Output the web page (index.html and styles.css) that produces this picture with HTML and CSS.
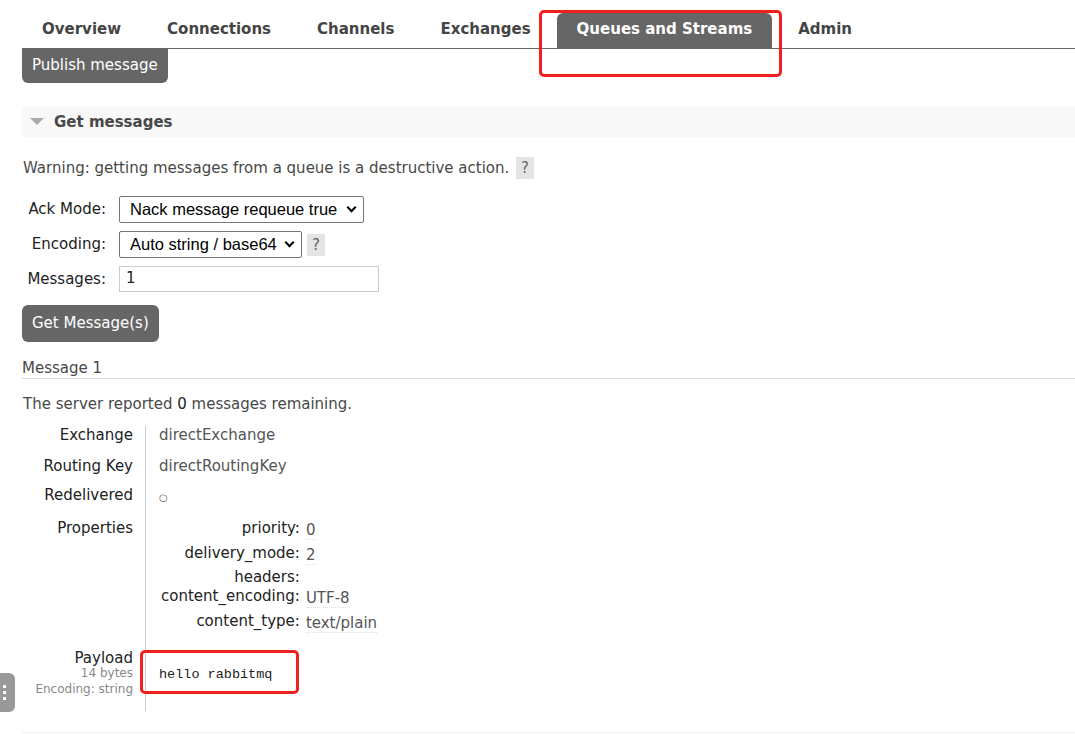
FILE: index.html
```html
<!DOCTYPE html>
<html>
<head>
<meta charset="utf-8">
<link rel="stylesheet" href="styles.css">
</head>
<body>
<div class="page">
  <nav class="tabs">
    <span class="tab">Overview</span>
    <span class="tab">Connections</span>
    <span class="tab">Channels</span>
    <span class="tab">Exchanges</span>
    <span class="tab active">Queues and Streams</span>
    <span class="tab">Admin</span>
  </nav>
  <div class="sub"><span class="btn-tab">Publish message</span></div>

  <div class="section-head"><span class="tri"></span>Get messages</div>

  <p class="warn">Warning: getting messages from a queue is a destructive action. <span class="help">?</span></p>

  <div class="form">
    <label class="lbl">Ack Mode:</label>
    <div class="ctl"><span class="select w1">Nack message requeue true<span class="chev"></span></span></div>
    <label class="lbl">Encoding:</label>
    <div class="ctl"><span class="select w2">Auto string / base64<span class="chev"></span></span><span class="help h2">?</span></div>
    <label class="lbl">Messages:</label>
    <div class="ctl"><span class="input">1</span></div>
  </div>

  <div class="actions"><span class="button">Get Message(s)</span></div>

  <h3 class="msg-title">Message 1</h3>
  <p class="remaining">The server reported <b>0</b> messages remaining.</p>

  <div class="details">
    <div class="k r1">Exchange</div><div class="v r1">directExchange</div>
    <div class="k r2">Routing Key</div><div class="v r2">directRoutingKey</div>
    <div class="k r3">Redelivered</div><div class="v r3 circle">○</div>
    <div class="k r4">Properties</div>
    <div class="v r4 props">
      <span class="pk">priority:</span><span class="pv">0</span>
      <span class="pk">delivery_mode:</span><span class="pv">2</span>
      <span class="pk">headers:</span><span class="pv empty"></span>
      <span class="pk">content_encoding:</span><span class="pv">UTF-8</span>
      <span class="pk">content_type:</span><span class="pv">text/plain</span>
    </div>
    <div class="k r5 payload-k">Payload<small>14 bytes</small><small>Encoding: string</small></div>
    <div class="v r5 payload"><pre>hello rabbitmq</pre></div>
  </div>
  <div class="endline"></div>
</div>

<div class="side-tab"><i></i><i></i><i></i></div>
<div class="mark mark-tab"></div>
<div class="mark mark-payload"></div>
</body>
</html>
```

FILE: styles.css
```css
* { box-sizing: border-box; }
html, body { margin: 0; padding: 0; background: #fff; }
body {
  font-family: "DejaVu Sans", Verdana, sans-serif;
  font-size: 15px;
  color: #484848;
  width: 1075px;
  height: 734px;
  overflow: hidden;
  position: relative;
}
.page { padding-left: 22px; }

.tabs {
  display: flex;
  align-items: flex-end;
  height: 49px;
  border-bottom: 1px solid #666;
}
.tab {
  font-weight: bold;
  font-size: 15px;
  color: #444;
  padding: 0 20px;
  height: 35px;
  line-height: 32px;
  margin-right: 6px;
  border-radius: 6px 6px 0 0;
  white-space: nowrap;
}
.tab.active { background: #666; color: #fff; }

.sub { display: flex; }
.btn-tab {
  background: #666;
  color: #fff;
  padding: 0 10px;
  height: 34px;
  line-height: 32px;
  border-radius: 0 0 6px 6px;
}

.section-head {
  margin-top: 23px;
  background: #f8f8f8;
  height: 31px;
  display: flex;
  align-items: center;
  font-weight: bold;
  color: #484848;
  padding-left: 8px;
}
.tri {
  width: 0; height: 0;
  border-left: 7px solid transparent;
  border-right: 7px solid transparent;
  border-top: 7px solid #aaa;
  margin-right: 10px;
}

.warn { margin: 20px 0 0 1px; height: 22px; line-height: 22px; display: flex; align-items: center; white-space: pre; }
.help {
  display: inline-block;
  background: #e4e4e4;
  color: #666;
  width: 18px;
  height: 22px;
  line-height: 22px;
  text-align: center;
  margin-left: 2px;
}
.form {
  margin-top: 17px;
  display: grid;
  grid-template-columns: 97px auto;
  row-gap: 8px;
  align-items: center;
}
.lbl { text-align: right; padding-right: 13px; color: #222; padding-bottom: 1px; }
.ctl { display: flex; align-items: center; }
.select {
  display: inline-flex;
  align-items: center;
  justify-content: space-between;
  height: 27px;
  border: 1px solid #767676;
  border-radius: 2px;
  font-family: "Liberation Sans", Arial, sans-serif;
  font-size: 16.5px;
  color: #000;
  padding: 0 6px 0 10px;
  white-space: nowrap;
}
.w1 { width: 245px; }
.w2 { width: 183px; }
.chev {
  width: 7px; height: 7px;
  border-right: 2px solid #000;
  border-bottom: 2px solid #000;
  transform: rotate(45deg);
  margin: -4px 2px 0 0;
}
.h2 { margin-left: 5px; }
.input {
  display: inline-block;
  width: 260px;
  height: 26px;
  border: 1px solid #ccc;
  color: #222;
  padding: 0 6px;
  line-height: 22px;
}

.actions { margin-top: 13px; display: flex; }
.button {
  background: #666;
  color: #fff;
  border-radius: 6px;
  padding: 0 10px;
  height: 37px;
  line-height: 37px;
}

.msg-title {
  margin: 17px 0 0 0;
  font-weight: normal;
  font-size: 15px;
  color: #484848;
  line-height: 18px;
  padding-bottom: 1px;
  border-bottom: 1px solid #ddd;
}
.remaining { margin: 16px 0 0 1px; line-height: 18px; }
.remaining b { font-weight: normal; color: #222; }

.details {
  margin-top: 13px;
  display: grid;
  grid-template-columns: 124px auto;
  color: #222;
  line-height: 18px;
}
.k {
  text-align: right;
  padding-right: 12px;
  border-right: 1px solid #ccc;
}
.v { padding-left: 13px; color: #555; }
.r1 { padding-bottom: 13px; }
.r2 { padding-bottom: 11px; }
.r3 { padding-bottom: 12px; }
.r4 { padding-bottom: 19px; }
.r5 { padding-bottom: 14px; }
.circle { font-size: 10px; padding-top: 3px; line-height: 18px; }
.props {
  display: grid;
  grid-template-columns: max-content auto;
  grid-template-rows: 25px 24px 19px 25px 18px;
  padding-left: 0;
  align-items: start;
}
.pk { text-align: right; color: #222; padding-right: 6px; line-height: 18px; padding-left: 15px; }
.pv { color: #555; border-bottom: 1px dotted #ddd; justify-self: start; line-height: 18px; padding-top: 2px; }
.pv.empty { border: 0; }
.payload-k { display: flex; flex-direction: column; align-items: flex-end; }
.payload-k small { font-size: 12px; color: #888; line-height: 16px; }
.payload-k small:first-of-type { margin-top: -2px; }
.payload pre {
  margin: 17px 0 0 0;
  font-family: "Liberation Mono", "DejaVu Sans Mono", monospace;
  font-size: 13.5px;
  line-height: 18px;
  color: #222;
}
.endline { margin-top: 21px; border-top: 1px solid #eee; }

.side-tab {
  position: absolute;
  left: 0; top: 673px;
  width: 15px; height: 39px;
  background: #999;
  border-radius: 0 6px 6px 0;
  display: flex; flex-direction: column; align-items: center; justify-content: center; gap: 3px;
}
.side-tab i { width: 3px; height: 3px; background: #fff; display: block; margin-left: -6px; }

.mark { position: absolute; border: 3px solid #f0201c; border-radius: 5px; }
.mark-tab { left: 539px; top: 10px; width: 243px; height: 67px; }
.mark-payload { left: 140px; top: 650px; width: 159px; height: 44px; }
```
